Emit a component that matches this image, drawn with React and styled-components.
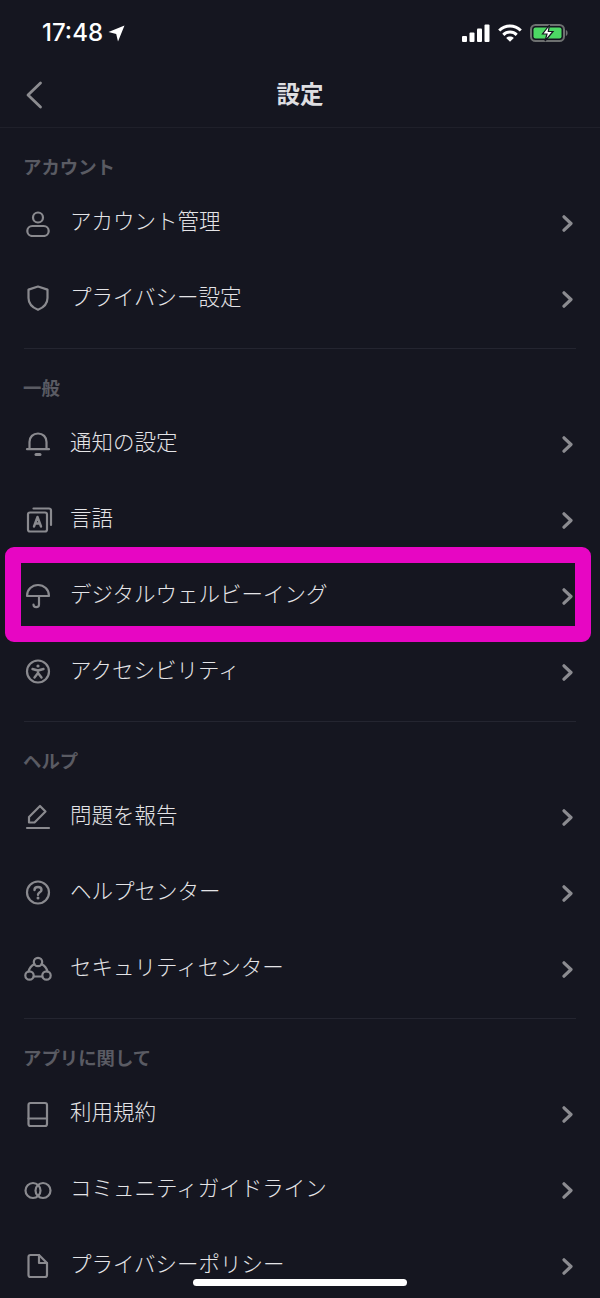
import React from "react";
import styled, { createGlobalStyle } from "styled-components";

const GlobalStyle = createGlobalStyle`
  html, body {
    margin: 0;
    padding: 0;
    background: #151620;
  }
`;

const PersonIcon = () => (
  <Glyph viewBox="0 0 30 30">
    <circle cx="15" cy="10.5" r="5" />
    <rect x="4.3" y="19" width="21.4" height="10" rx="5" />
  </Glyph>
);

const ShieldIcon = () => (
  <Glyph viewBox="0 0 30 30">
    <path d="M15 3.5 L24.5 6.6 V15 C24.5 20.5 20 24.8 15 26.8 C10 24.8 5.5 20.5 5.5 15 V6.6 Z" />
  </Glyph>
);

const BellIcon = () => (
  <Glyph viewBox="0 0 30 30">
    <path d="M6.5 21 V14 C6.5 9 10 5.5 15 5.5 C20 5.5 23.5 9 23.5 14 V21" />
    <path d="M4 21.2 H26" />
    <path d="M13 26.5 H17" strokeWidth="3" />
  </Glyph>
);

const LanguageIcon = () => (
  <Glyph viewBox="0 0 30 30">
    <rect x="5" y="8.5" width="19" height="19" rx="2" />
    <path d="M10.5 4.5 H26 A2 2 0 0 1 28 6.5 V21" />
    <path d="M11 22.5 L14.5 13 L18 22.5 M12.2 19.5 H16.8" strokeWidth="2.4" />
  </Glyph>
);

const UmbrellaIcon = () => (
  <Glyph viewBox="0 0 30 30">
    <path d="M4 16 C4 9.5 9 5 15 5 C21 5 26 9.5 26 16 Z" />
    <path d="M16 16 V24.5 C16 28 10.5 28 10.5 24.5" />
  </Glyph>
);

const AccessibilityIcon = () => (
  <Glyph viewBox="0 0 30 30">
    <circle cx="15" cy="15.5" r="11" />
    <circle cx="15" cy="10" r="1.6" fill="#8a8a8f" stroke="none" />
    <path d="M9.5 13 L15 14.5 L20.5 13 M15 14.5 V17 L11.5 21.5 M15 17 L18.5 21.5" strokeWidth="2.4" />
  </Glyph>
);

const PenIcon = () => (
  <Glyph viewBox="0 0 30 30">
    <path d="M6 21.5 V16 L17 5 L22.5 10.5 L11.5 21.5 Z" />
    <path d="M4 27 H26" />
  </Glyph>
);

const HelpIcon = () => (
  <Glyph viewBox="0 0 30 30">
    <circle cx="15" cy="15.5" r="11" />
    <path d="M11.5 13 C11.5 11 13 10 15 10 C17 10 18.5 11.1 18.5 12.9 C18.5 15.3 15 15.3 15 17.7" strokeWidth="2.4" />
    <circle cx="15" cy="21" r="1.5" fill="#8a8a8f" stroke="none" />
  </Glyph>
);

const SecurityIcon = () => (
  <Glyph viewBox="0 0 30 30">
    <circle cx="15" cy="9" r="4.2" />
    <circle cx="6.5" cy="22.5" r="4.2" />
    <circle cx="23.5" cy="22.5" r="4.2" />
    <path d="M11.4 11 C8.5 12.5 6.5 15 5.6 18.4 M18.6 11 C21.5 12.5 23.5 15 24.4 18.4 M10.7 23.5 H19.3" />
  </Glyph>
);

const BookIcon = () => (
  <Glyph viewBox="0 0 30 30">
    <rect x="5.5" y="5" width="18.5" height="23" rx="2" />
    <path d="M5.5 20.5 H24" />
  </Glyph>
);

const CommunityIcon = () => (
  <Glyph viewBox="0 0 30 30" strokeWidth="3">
    <circle cx="10" cy="16.5" r="7.5" />
    <circle cx="20" cy="16.5" r="7.5" />
  </Glyph>
);

const DocumentIcon = () => (
  <Glyph viewBox="0 0 30 30">
    <path d="M7.5 5 H16 L24 13 V25 A2 2 0 0 1 22 27 H7.5 A2 2 0 0 1 5.5 25 V7 A2 2 0 0 1 7.5 5 Z" />
    <path d="M16 5 V13 H24" />
  </Glyph>
);

const sections = [
  {
    title: "アカウント",
    items: [
      { label: "アカウント管理", icon: PersonIcon },
      { label: "プライバシー設定", icon: ShieldIcon },
    ],
  },
  {
    title: "一般",
    items: [
      { label: "通知の設定", icon: BellIcon },
      { label: "言語", icon: LanguageIcon },
      { label: "デジタルウェルビーイング", icon: UmbrellaIcon, highlight: true },
      { label: "アクセシビリティ", icon: AccessibilityIcon },
    ],
  },
  {
    title: "ヘルプ",
    items: [
      { label: "問題を報告", icon: PenIcon },
      { label: "ヘルプセンター", icon: HelpIcon },
      { label: "セキュリティセンター", icon: SecurityIcon },
    ],
  },
  {
    title: "アプリに関して",
    items: [
      { label: "利用規約", icon: BookIcon },
      { label: "コミュニティガイドライン", icon: CommunityIcon },
      { label: "プライバシーポリシー", icon: DocumentIcon },
    ],
  },
];

const App = () => {
  return (
    <Page>
      <GlobalStyle />
      <StatusBar>
        <TimeWrap>
          <Time>17:48</Time>
          <svg width="17" height="17" viewBox="0 0 17 17">
            <path d="M16.5 0.5 L10 16.5 L8.2 8.9 L0.5 7 Z" fill="#fff" />
          </svg>
        </TimeWrap>
        <StatusIcons>
          <svg width="28" height="18" viewBox="0 0 28 18">
            <rect x="0" y="12" width="5" height="6" rx="1" fill="#fff" />
            <rect x="7.5" y="8.5" width="5" height="9.5" rx="1" fill="#fff" />
            <rect x="15" y="4.5" width="5" height="13.5" rx="1" fill="#fff" />
            <rect x="22.5" y="0.5" width="5" height="17.5" rx="1" fill="#fff" />
          </svg>
          <svg width="24" height="18" viewBox="0 0 24 18" fill="none" stroke="#fff" strokeWidth="3">
            <path d="M1.2 6.5 C7.5 0.5 16.5 0.5 22.8 6.5" />
            <path d="M5.3 10.8 C9 7.2 15 7.2 18.7 10.8" />
            <path d="M12 17.8 L8.2 13.9 C10.3 12 13.7 12 15.8 13.9 Z" fill="#fff" stroke="none" />
          </svg>
          <svg width="38" height="18" viewBox="0 0 38 18">
            <rect x="1" y="1" width="33" height="16" rx="4.5" fill="none" stroke="#6d7070" strokeWidth="2" />
            <rect x="3.5" y="3.5" width="28" height="11" rx="2" fill="#4cd964" />
            <path d="M35.8 6 C37.2 6.5 37.6 7.6 37.6 9 C37.6 10.4 37.2 11.5 35.8 12 Z" fill="#6d7070" />
            <path d="M19.5 1 L12.5 10 H17 L15 17 L23 7.5 H18.3 Z" fill="#fff" stroke="#151620" strokeWidth="1.2" />
          </svg>
        </StatusIcons>
      </StatusBar>
      <NavBar>
        <BackButton>
          <svg width="18" height="28" viewBox="0 0 18 28" fill="none" stroke="#8c8c90" strokeWidth="2.8" strokeLinecap="round" strokeLinejoin="round">
            <path d="M15.5 2 L3 14 L15.5 26" />
          </svg>
        </BackButton>
        <Title>設定</Title>
      </NavBar>
      {sections.map((section, i) => (
        <Section key={section.title} $last={i === sections.length - 1}>
          <SectionTitle>{section.title}</SectionTitle>
          {section.items.map((item) => (
            <Row key={item.label} $highlight={item.highlight}>
              <IconBox>
                <item.icon />
              </IconBox>
              <RowLabel>{item.label}</RowLabel>
              <Chevron viewBox="0 0 12 17">
                <path d="M2 1.8 L9 8.5 L2 15.2" />
              </Chevron>
            </Row>
          ))}
        </Section>
      ))}
      <HomeIndicator />
    </Page>
  );
};

const Page = styled.div`
  position: relative;
  width: 600px;
  height: 1298px;
  overflow: hidden;
  background: #151620;
  font-family: "Noto Sans CJK JP", "Noto Sans", sans-serif;
`;

const StatusBar = styled.div`
  height: 64px;
  box-sizing: border-box;
  padding: 24px 32px 0 42px;
  display: flex;
  justify-content: space-between;
  align-items: flex-start;
`;

const TimeWrap = styled.div`
  display: flex;
  align-items: center;
  gap: 5px;
  height: 18px;
`;

const Time = styled.span`
  font-family: Inter, "Liberation Sans", sans-serif;
  font-size: 24px;
  font-weight: 500;
  line-height: 18px;
  color: #ffffff;
`;

const StatusIcons = styled.div`
  display: flex;
  align-items: center;
  gap: 8px;
  height: 18px;
`;

const NavBar = styled.div`
  position: relative;
  height: 63px;
  display: flex;
  align-items: center;
  justify-content: center;
  border-bottom: 1px solid #1f202a;
`;

const BackButton = styled.div`
  position: absolute;
  left: 25px;
  top: 17px;
  display: flex;
`;

const Title = styled.h1`
  margin: 0 0 6px;
  font-size: 23.5px;
  font-weight: 700;
  line-height: 30px;
  color: #dedee1;
`;

const Section = styled.section`
  margin: 0 24px;
  padding: 20px 0 12px;
  border-bottom: ${(p) => (p.$last ? "none" : "1px solid #242530")};
`;

const SectionTitle = styled.h2`
  margin: 0 0 0 -1px;
  height: 36px;
  font-size: 18.4px;
  font-weight: 700;
  line-height: 36px;
  color: #5a5b63;
`;

const Row = styled.div`
  position: relative;
  height: 76px;
  margin: 0 -24px;
  padding: 0 24px 0 23px;
  display: flex;
  align-items: center;

  ${(p) =>
    p.$highlight &&
    `
    &::after {
      content: "";
      position: absolute;
      left: 5px;
      right: 9px;
      top: -10px;
      bottom: -9px;
      border: 16px solid #e706c3;
      border-radius: 9px;
      pointer-events: none;
    }
  `}
`;

const IconBox = styled.div`
  width: 30px;
  height: 30px;
  flex-shrink: 0;
  display: flex;
`;

const Glyph = styled.svg`
  width: 30px;
  height: 30px;
  fill: none;
  stroke: #8a8a8f;
  stroke-width: 2.2;
  stroke-linecap: round;
  stroke-linejoin: round;
`;

const RowLabel = styled.span`
  flex: 1;
  margin: 0 0 4px 17px;
  font-size: 21.5px;
  font-weight: 300;
  line-height: 30px;
  color: #e4e4e7;
`;

const Chevron = styled.svg`
  width: 12px;
  height: 17px;
  margin: 2px 2px 0 0;
  fill: none;
  stroke: #8b8b90;
  stroke-width: 3.2;
  stroke-linecap: round;
  stroke-linejoin: round;
`;

const HomeIndicator = styled.div`
  position: absolute;
  left: 193px;
  bottom: 12px;
  width: 214px;
  height: 7px;
  border-radius: 4px;
  background: #ffffff;
`;

export default App;
